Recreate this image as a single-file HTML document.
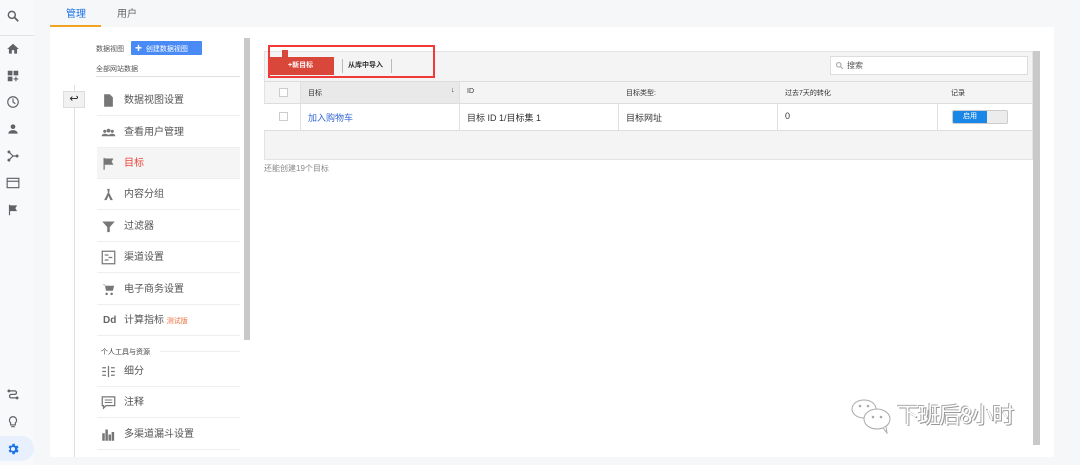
<!DOCTYPE html>
<html><head><meta charset="utf-8"><style>
*{margin:0;padding:0;box-sizing:border-box}
body{width:1080px;height:465px;background:#f6f7f9;font-family:"Liberation Sans","Noto Sans CJK SC",sans-serif;position:relative;overflow:hidden;color:#555}
.a{position:absolute}
.rail{left:0;top:0;width:34px;height:465px;background:#f8f9fa}
.ic{position:absolute;left:6px;width:14px;height:14px;fill:#5f6368}
.menu .it{position:absolute;left:97px;width:143px;height:31px;border-bottom:1px solid #eee;font-size:10px;color:#555;line-height:31px;padding-left:27px}
.menu .it svg{position:absolute;left:4px;top:8px;width:15px;height:15px;fill:#777}
</style></head><body>
<div class="a rail"></div>
<svg class="ic" style="top:9px" viewBox="0 0 24 24"><circle cx="10" cy="10" r="6" fill="none" stroke="#5f6368" stroke-width="2.5"/><path d="M14 14l7 7" stroke="#5f6368" stroke-width="3"/></svg>
<div class="a" style="left:0;top:35px;width:34px;height:1px;background:#e3e3e3"></div>
<svg class="ic" style="top:42px" viewBox="0 0 24 24"><path d="M10 20v-6h4v6h5v-8h3L12 3 2 12h3v8z"/></svg>
<svg class="ic" style="top:69px" viewBox="0 0 24 24"><path d="M3 3h8v8H3zM13 3h8v8h-8zM3 13h8v8H3zM16 13h2v3h3v2h-3v3h-2v-3h-3v-2h3z"/></svg>
<svg class="ic" style="top:95px" viewBox="0 0 24 24"><circle cx="12" cy="12" r="9" fill="none" stroke="#5f6368" stroke-width="2"/><path d="M12 6v6l4 3" stroke="#5f6368" stroke-width="2" fill="none"/></svg>
<svg class="ic" style="top:122px" viewBox="0 0 24 24"><circle cx="12" cy="8" r="4"/><path d="M4 20c0-4 4-6 8-6s8 2 8 6z"/></svg>
<svg class="ic" style="top:149px" viewBox="0 0 24 24"><circle cx="5" cy="5" r="2.5"/><circle cx="5" cy="19" r="2.5"/><circle cx="19" cy="12" r="2.5"/><path d="M5 5l7 7h7M5 19l7-7" stroke="#5f6368" stroke-width="2" fill="none"/></svg>
<svg class="ic" style="top:176px" viewBox="0 0 24 24"><rect x="2" y="4" width="20" height="16" fill="none" stroke="#5f6368" stroke-width="2"/><path d="M2 9h20" stroke="#5f6368" stroke-width="2"/></svg>
<svg class="ic" style="top:203px" viewBox="0 0 24 24"><path d="M5 3h2v18H5zM7 4h12l-3 5 3 5H7z"/></svg>
<svg class="ic" style="top:388px" viewBox="0 0 24 24"><path d="M5 5h10a3 3 0 0 1 0 6H9a3 3 0 0 0 0 6h10" stroke="#5f6368" stroke-width="2.2" fill="none"/><circle cx="5" cy="5" r="2.5"/><circle cx="19" cy="17" r="2.5"/></svg>
<svg class="ic" style="top:415px" viewBox="0 0 24 24"><path d="M12 3a6 6 0 0 0-4 10.5V17h8v-3.5A6 6 0 0 0 12 3z" fill="none" stroke="#5f6368" stroke-width="2"/><path d="M9 20h6" stroke="#5f6368" stroke-width="2"/></svg>
<div class="a" style="left:0;top:436px;width:34px;height:25px;background:#e8f0fe;border-radius:0 13px 13px 0"></div>
<svg class="ic" style="top:442px;fill:#1a73e8" viewBox="0 0 24 24"><path d="M19.4 13a7.5 7.5 0 0 0 0-2l2.1-1.6-2-3.5-2.5 1a7 7 0 0 0-1.7-1L15 3h-4l-.4 2.7a7 7 0 0 0-1.7 1l-2.5-1-2 3.5L6.6 11a7.5 7.5 0 0 0 0 2l-2.1 1.6 2 3.5 2.5-1a7 7 0 0 0 1.7 1L11 21h4l.4-2.7a7 7 0 0 0 1.7-1l2.5 1 2-3.5zM12 15.5a3.5 3.5 0 1 1 0-7 3.5 3.5 0 0 1 0 7z"/></svg>

<div class="a" style="left:48px;top:0;width:1032px;height:27px;background:#f6f7f9"></div>
<div class="a" style="left:66px;top:5px;font-size:10px;color:#1a73e8">管理</div>
<div class="a" style="left:117px;top:5px;font-size:10px;color:#666">用户</div>
<div class="a" style="left:50px;top:25px;width:51px;height:2px;background:#f4a320"></div>

<div class="a" style="left:50px;top:27px;width:1004px;height:430px;background:#fff"></div>
<div class="a" style="left:74px;top:85px;width:1px;height:372px;background:#e0e0e0"></div>
<div class="a" style="left:63px;top:91px;width:22px;height:17px;background:#f1f1f1;border:1px solid #ddd;font-size:11px;text-align:center;line-height:14px;color:#222">↩</div>
<div class="a" style="left:244px;top:38px;width:6px;height:302px;background:#c9c9c9"></div>

<div class="a" style="left:96px;top:44px;font-size:7px;color:#555">数据视图</div>
<div class="a" style="left:131px;top:41px;width:71px;height:14px;background:#4a8af4;color:#fff;font-size:7px;line-height:14px;padding-left:4px;border-radius:1px"><b style="font-size:12px;vertical-align:-1px">+</b>&nbsp;&nbsp;创建数据视图</div>
<div class="a" style="left:96px;top:64px;font-size:7px;color:#555">全部网站数据</div>
<div class="a" style="left:96px;top:76px;width:144px;height:1px;background:#e0e0e0"></div>

<div class="menu">
<div class="it" style="top:85px">数据视图设置<svg viewBox="0 0 24 24"><path d="M5 2h9l5 5v15H5z"/></svg></div>
<div class="it" style="top:117px">查看用户管理<svg viewBox="0 0 24 24"><circle cx="6" cy="10" r="2.5"/><circle cx="12" cy="9" r="3"/><circle cx="18" cy="10" r="2.5"/><path d="M1 18c0-3 3-4 5-4s5 1 6 2c1-1 4-2 6-2s5 1 5 4z"/></svg></div>
<div class="it" style="top:148px;background:#f5f5f5;color:#e8453c">目标<svg viewBox="0 0 24 24"><path d="M4 3h2v19H4zM6 4h14l-3 5 3 5H6z"/></svg></div>
<div class="it" style="top:179px">内容分组<svg viewBox="0 0 24 24"><path d="M10 3h4l-1 6 6 12h-4l-3-7-3 7H5l6-12z"/></svg></div>
<div class="it" style="top:211px">过滤器<svg viewBox="0 0 24 24"><path d="M2 4h20l-8 9v8h-4v-8z"/></svg></div>
<div class="it" style="top:242px">渠道设置<svg viewBox="0 0 24 24"><rect x="2" y="2" width="20" height="20" fill="none" stroke="#777" stroke-width="2"/><path d="M6 8h6M12 12h6M6 16h6" stroke="#777" stroke-width="2"/></svg></div>
<div class="it" style="top:274px">电子商务设置<svg viewBox="0 0 24 24"><path d="M2 4h4l2 10h11l2-8H8"/><circle cx="9" cy="19" r="2"/><circle cx="17" cy="19" r="2"/></svg></div>
<div class="it" style="top:305px"><b style="position:absolute;left:6px;color:#666;font-size:10px">Dd</b>计算指标 <span style="color:#e8713c;font-size:7px">测试版</span></div>
<div class="a" style="left:101px;top:347px;font-size:7px;color:#444">个人工具与资源</div>
<div class="a" style="left:160px;top:351px;width:80px;height:1px;background:#eee"></div>
<div class="it" style="top:356px">细分<svg viewBox="0 0 24 24"><path d="M2 5h6v2H2zM2 11h6v2H2zM2 17h6v2H2zM11 3h2v18h-2zM16 5h6v2h-6zM16 11h6v2h-6zM16 17h6v2h-6z"/></svg></div>
<div class="it" style="top:387px">注释<svg viewBox="0 0 24 24"><path d="M2 3h20v14H8l-4 4v-4H2z" fill="none" stroke="#777" stroke-width="2"/><path d="M6 8h12M6 12h12" stroke="#777" stroke-width="1.5"/></svg></div>
<div class="it" style="top:419px">多渠道漏斗设置<svg viewBox="0 0 24 24"><path d="M2 10h4v12H2zM7 4h4v18H7zM12 12h4v10h-4zM17 8h4v14h-4z"/></svg></div>
</div>

<div class="a" style="left:264px;top:51px;width:769px;height:109px;background:#f4f4f4;border:1px solid #e3e3e3"></div>
<div class="a" style="left:1033px;top:51px;width:7px;height:394px;background:#c9c9c9"></div>
<div class="a" style="left:269px;top:57px;width:65px;height:18px;background:#d9473a;color:#fff;font-size:7px;font-weight:bold;line-height:18px;padding-left:19px">+新目标</div>
<div class="a" style="left:282px;top:50px;width:6px;height:8px;background:#d9473a"></div>
<div class="a" style="left:342px;top:59px;width:50px;height:14px;border-left:1px solid #bbb;border-right:1px solid #bbb;font-size:7px;font-weight:bold;color:#333;line-height:14px;padding-left:5px">从库中导入</div>
<div class="a" style="left:268px;top:45px;width:167px;height:33px;border:2.5px solid #f03a3a"></div>
<div class="a" style="left:830px;top:56px;width:198px;height:19px;background:#fff;border:1px solid #ddd;font-size:8px;color:#555;line-height:17px;padding-left:16px">搜索
<svg style="position:absolute;left:4px;top:4px" width="9" height="9" viewBox="0 0 24 24"><circle cx="10" cy="10" r="6" fill="none" stroke="#aaa" stroke-width="3"/><path d="M14 14l7 7" stroke="#aaa" stroke-width="3"/></svg></div>
<div class="a" style="left:264px;top:81px;width:769px;height:1px;background:#ddd"></div>
<div class="a" style="left:300px;top:82px;width:160px;height:21px;background:#e9e9e9"></div>
<div class="a" style="left:264px;top:103px;width:768px;height:28px;background:#fff;border-top:1px solid #ddd;border-bottom:1px solid #ddd"></div>
<div class="a" style="left:300px;top:82px;width:1px;height:49px;background:#e0e0e0"></div>
<div class="a" style="left:459px;top:82px;width:1px;height:49px;background:#e0e0e0"></div>
<div class="a" style="left:618px;top:104px;width:1px;height:27px;background:#e0e0e0"></div>
<div class="a" style="left:777px;top:104px;width:1px;height:27px;background:#e0e0e0"></div>
<div class="a" style="left:937px;top:104px;width:1px;height:27px;background:#e0e0e0"></div>
<div class="a" style="left:279px;top:88px;width:9px;height:9px;border:1px solid #ccc;background:#fff"></div>
<div class="a" style="left:279px;top:112px;width:9px;height:9px;border:1px solid #ccc;background:#fff"></div>
<div class="a" style="left:308px;top:88px;font-size:7px;color:#333">目标</div>
<div class="a" style="left:451px;top:87px;font-size:7px;color:#333">↓</div>
<div class="a" style="left:467px;top:88px;font-size:7px;color:#333">ID</div>
<div class="a" style="left:626px;top:88px;font-size:7px;color:#333">目标类型:</div>
<div class="a" style="left:785px;top:88px;font-size:7px;color:#333">过去7天的转化</div>
<div class="a" style="left:951px;top:88px;font-size:7px;color:#333">记录</div>
<div class="a" style="left:308px;top:111px;font-size:9px;color:#3367d6">加入购物车</div>
<div class="a" style="left:467px;top:111px;font-size:9px;color:#333">目标 ID 1/目标集 1</div>
<div class="a" style="left:626px;top:111px;font-size:9px;color:#333">目标网址</div>
<div class="a" style="left:785px;top:111px;font-size:9px;color:#333">0</div>
<div class="a" style="left:952px;top:110px;width:56px;height:14px;border:1px solid #ccc;border-radius:2px;background:#ececec;overflow:hidden"><div style="width:34px;height:14px;background:#1a87e8;color:#fff;font-size:7px;text-align:center;line-height:12px">启用</div></div>
<div class="a" style="left:264px;top:163px;font-size:8px;color:#888">还能创建19个目标</div>

<svg class="a" style="left:850px;top:398px" width="44" height="36" viewBox="0 0 44 36"><ellipse cx="14" cy="11" rx="12" ry="9" fill="#fff" stroke="#aaa" stroke-width="1"/><ellipse cx="27" cy="21" rx="13" ry="10" fill="#fff" stroke="#aaa" stroke-width="1"/><path d="M33 30l4 5-1-6" fill="#fff" stroke="#aaa"/><circle cx="10" cy="8" r="1.3" fill="#aaa"/><circle cx="18" cy="8" r="1.3" fill="#aaa"/><circle cx="23" cy="19" r="1.3" fill="#aaa"/><circle cx="31" cy="19" r="1.3" fill="#aaa"/></svg>
<div class="a" style="left:897px;top:398px;font-size:22px;color:#fff;text-shadow:-1px -1px 0 #aaa,1px 1px 0 #999;font-family:'Noto Sans CJK SC',sans-serif;letter-spacing:-1px">下班后8小时</div>
</body></html>
